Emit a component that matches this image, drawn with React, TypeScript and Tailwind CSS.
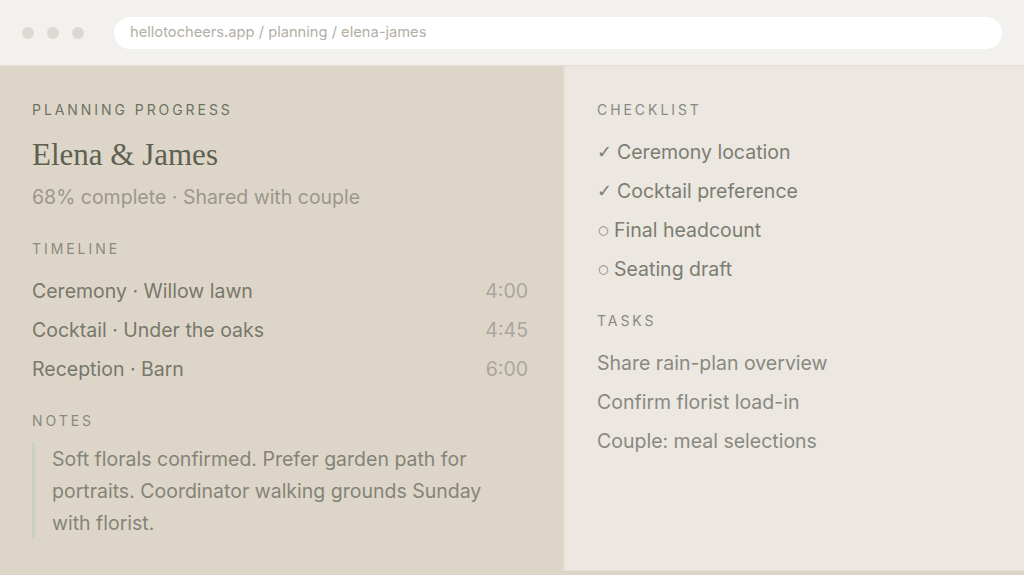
import React from "react";

const sans = { fontFamily: "Inter, 'Noto Sans', 'DejaVu Sans', sans-serif" };

function Label({ children, className = "" }: { children: React.ReactNode; className?: string }) {
  return (
    <div className={`text-[14px] leading-4 tracking-[0.21em] uppercase ${className}`}>{children}</div>
  );
}

export default function App() {
  const timeline = [
    ["Ceremony · Willow lawn", "4:00"],
    ["Cocktail · Under the oaks", "4:45"],
    ["Reception · Barn", "6:00"],
  ];
  const checklist: [boolean, string][] = [
    [true, "Ceremony location"],
    [true, "Cocktail preference"],
    [false, "Final headcount"],
    [false, "Seating draft"],
  ];
  const tasks = ["Share rain-plan overview", "Confirm florist load-in", "Couple: meal selections"];

  return (
    <div className="w-[1024px] h-[575px] overflow-hidden bg-[#ded5c9] flex flex-col" style={sans}>
      {/* browser chrome */}
      <div className="h-[66px] shrink-0 bg-[#f3f1ee] border-b border-[#e3ddd5] flex items-center pl-[22px] pr-[22px]">
        <div className="flex items-center gap-[13px]">
          <div className="w-3 h-3 rounded-full bg-[#dcd8d2]" />
          <div className="w-3 h-3 rounded-full bg-[#dcd8d2]" />
          <div className="w-3 h-3 rounded-full bg-[#dcd8d2]" />
        </div>
        <div className="ml-[30px] flex-1 h-8 rounded-full bg-white flex items-center pl-4 text-[14.7px] text-[#b3aea6]">
          hellotocheers.app / planning / elena-james
        </div>
      </div>

      {/* main */}
      <div className="flex flex-1">
        {/* left */}
        <div className="w-[563px] shrink-0 pl-8 pr-[35px] pt-[36px]">
          <Label className="text-[#6c7261]">Planning Progress</Label>
          <div
            className="mt-[19px] text-[31px] leading-9 text-[#5c6150]"
            style={{ fontFamily: "'Liberation Serif', 'DejaVu Serif', serif" }}
          >
            Elena &amp; James
          </div>
          <div className="mt-[10px] text-[19.5px] leading-7 text-[#9b978d]">68% complete · Shared with couple</div>

          <Label className="mt-[30px] text-[#8a8a81]">Timeline</Label>
          <div className="mt-5 flex flex-col gap-[11px]">
            {timeline.map(([t, time]) => (
              <div key={t} className="flex justify-between text-[19.5px] leading-7">
                <span className="text-[#76786a]">{t}</span>
                <span className="text-[#aaa69c]">{time}</span>
              </div>
            ))}
          </div>

          <Label className="mt-[30px] text-[#8a8a81]">Notes</Label>
          <div className="mt-[14px] border-l-[3px] border-[#c8d1bf] pl-[17px]">
            <p className="max-w-[450px] text-[19.5px] leading-8 text-[#838478]">
              Soft florals confirmed. Prefer garden path for portraits. Coordinator walking grounds Sunday with
              florist.
            </p>
          </div>
        </div>

        {/* right */}
        <div className="flex-1 h-[505px] bg-[#ece7e1] border-l-2 border-b border-[#e4ddd3] pl-[32px] pt-[36px]">
          <Label className="text-[#8a8983]">Checklist</Label>
          <div className="mt-5 flex flex-col gap-[11px]">
            {checklist.map(([done, t]) => (
              <div key={t} className="flex items-center text-[19.5px] leading-7 text-[#7b7d71]">
                {done ? (
                  <span
                    className="w-[20px] text-[18px] font-bold"
                    style={{ fontFamily: "'DejaVu Sans', sans-serif" }}
                  >
                    ✓
                  </span>
                ) : (
                  <span className="w-[17px] text-[12px] pl-[1px]" style={{ fontFamily: "'DejaVu Sans', sans-serif" }}>
                    ○
                  </span>
                )}
                <span>{t}</span>
              </div>
            ))}
          </div>

          <Label className="mt-[30px] text-[#8a8983]">Tasks</Label>
          <div className="mt-5 flex flex-col gap-[11px]">
            {tasks.map((t) => (
              <div key={t} className="text-[19.5px] leading-7 text-[#888980]">
                {t}
              </div>
            ))}
          </div>
        </div>
      </div>
    </div>
  );
}
